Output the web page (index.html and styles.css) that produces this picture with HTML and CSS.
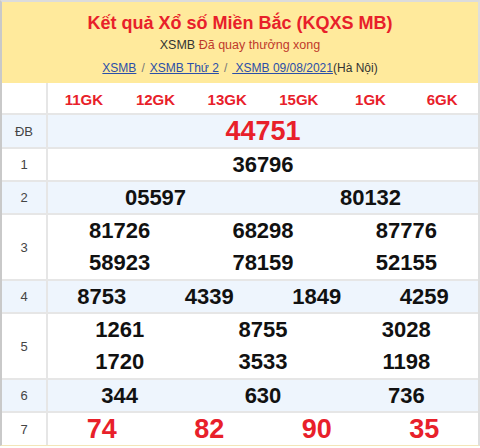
FILE: index.html
```html
<!DOCTYPE html>
<html lang="vi">
<head>
<meta charset="utf-8">
<link rel="stylesheet" href="styles.css">
</head>
<body>
<div class="box">
  <div class="head">
    <h1 class="title">Kết quả Xổ số Miền Bắc (KQXS MB)</h1>
    <p class="sub"><span class="code">XSMB</span> Đã quay thưởng xong</p>
    <p class="crumbs"><a href="#">XSMB</a><span class="sep">/</span><a href="#">XSMB Thứ 2</a><span class="sep">/</span><a href="#">&nbsp;XSMB 09/08/2021</a>(Hà Nội)</p>
  </div>
  <div class="tbl">
    <div class="row r-gk">
      <div class="lbl"></div>
      <div class="cells c6 gk"><span>11GK</span><span>12GK</span><span>13GK</span><span>15GK</span><span>1GK</span><span>6GK</span></div>
    </div>
    <div class="row alt r-db">
      <div class="lbl">ĐB</div>
      <div class="cells c1 big"><span>44751</span></div>
    </div>
    <div class="row">
      <div class="lbl">1</div>
      <div class="cells c1"><span>36796</span></div>
    </div>
    <div class="row alt">
      <div class="lbl">2</div>
      <div class="cells c2"><span>05597</span><span>80132</span></div>
    </div>
    <div class="row dbl">
      <div class="lbl">3</div>
      <div class="cells c3"><span>81726</span><span>68298</span><span>87776</span><span>58923</span><span>78159</span><span>52155</span></div>
    </div>
    <div class="row alt">
      <div class="lbl">4</div>
      <div class="cells c4"><span>8753</span><span>4339</span><span>1849</span><span>4259</span></div>
    </div>
    <div class="row dbl">
      <div class="lbl">5</div>
      <div class="cells c3"><span>1261</span><span>8755</span><span>3028</span><span>1720</span><span>3533</span><span>1198</span></div>
    </div>
    <div class="row alt">
      <div class="lbl">6</div>
      <div class="cells c3"><span>344</span><span>630</span><span>736</span></div>
    </div>
    <div class="row r-7">
      <div class="lbl">7</div>
      <div class="cells c4 big"><span>74</span><span>82</span><span>90</span><span>35</span></div>
    </div>
  </div>
</div>
</body>
</html>
```
FILE: styles.css
```css
html, body {
  margin: 0;
  padding: 0;
  background: #fff;
}
body {
  font-family: "Liberation Sans", Arial, sans-serif;
}
.box {
  width: 476px;
  border-top: 2px solid #dcdcdc;
  border-left: 2px solid #c9c9c9;
  border-right: 2px solid #dedede;
  border-bottom: 1px solid #f3e6b8;
}
.head {
  background: #ffea9c;
  height: 81px;
  display: flex;
  flex-direction: column;
  align-items: center;
}
.title {
  margin: 9px 0 0;
  font-size: 18px;
  line-height: 24px;
  font-weight: bold;
  color: #e8202a;
}
.sub {
  margin: 1px 0 0;
  font-size: 12.5px;
  line-height: 18px;
  color: #c0392b;
}
.sub .code {
  color: #333;
}
.crumbs {
  margin: 5px 0 0;
  font-size: 12px;
  line-height: 18px;
  color: #333;
}
.crumbs a {
  color: #2b4fa8;
  text-decoration: underline;
}
.crumbs .sep {
  color: #777;
  margin: 0 5px;
}
.row {
  display: grid;
  grid-template-columns: 46px 1fr;
  border-bottom: 2px solid #e6e6e6;
  height: 31px;
}
.row.alt {
  background: #eef5fd;
}
.r-gk { height: 30px; }
.r-db { height: 32px; }
.r-7 { height: 32px; border-bottom: none; }
.row.dbl { height: 64px; }
.lbl {
  border-right: 2px solid #e6e6e6;
  display: flex;
  align-items: center;
  justify-content: center;
  font-size: 13px;
  color: #444;
}
.cells {
  display: grid;
  grid-auto-rows: 1fr;
  align-items: center;
  justify-items: center;
  font-size: 22px;
  font-weight: bold;
  color: #111;
}
.c1 { grid-template-columns: 1fr; }
.c2 { grid-template-columns: repeat(2, 1fr); }
.c3 { grid-template-columns: repeat(3, 1fr); }
.c4 { grid-template-columns: repeat(4, 1fr); }
.c6 { grid-template-columns: repeat(6, 1fr); }
.gk {
  font-size: 15px;
  font-weight: bold;
  color: #e8202a;
  padding-top: 2px;
}
.big {
  font-size: 27px;
  color: #e8202a;
}
```
